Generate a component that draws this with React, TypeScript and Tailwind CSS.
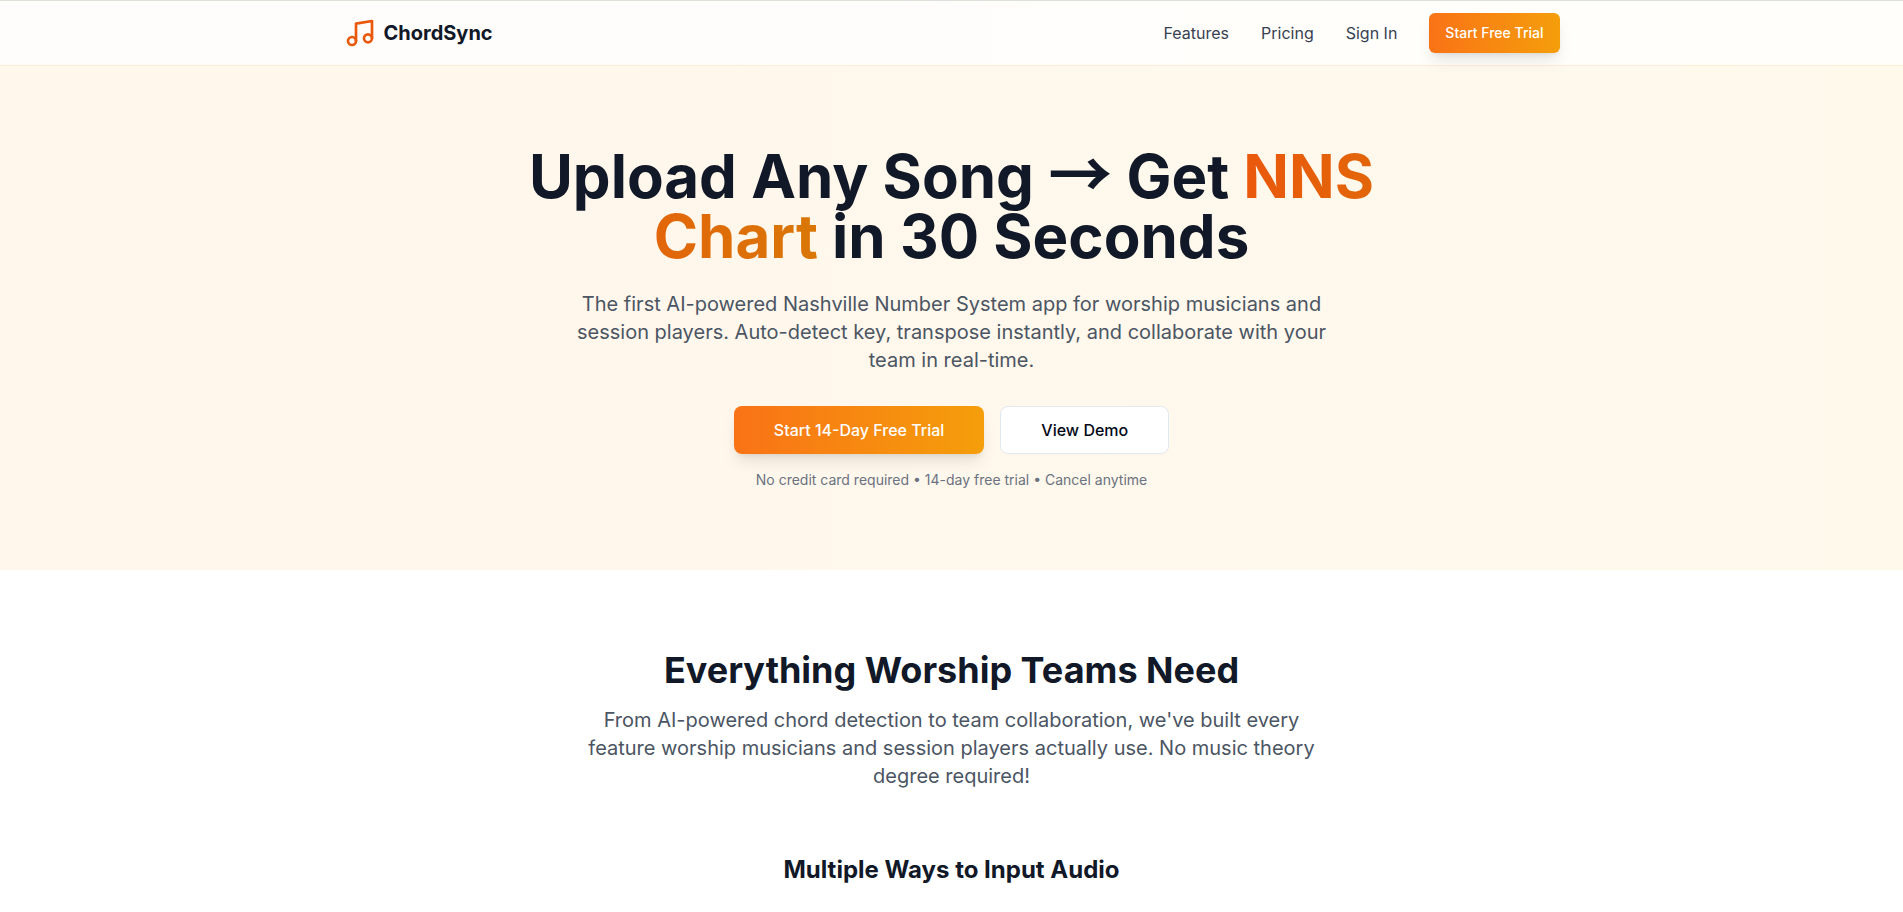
import React from 'react';
import { Music } from 'lucide-react';

const navLinks = [
  { name: 'Features', href: '#features' },
  { name: 'Pricing', href: '#pricing' },
  { name: 'Sign In', href: '#signin' },
];

const Navbar: React.FC = () => {
  return (
    <nav className="border-t border-b border-t-[#dde2d8] border-b-[#ffedd5] bg-white/80">
      <div className="max-w-7xl mx-auto px-4 sm:px-6 lg:px-8">
        <div className="flex items-center justify-between h-16">
          <a href="#" className="flex items-center gap-2">
            <Music className="h-8 w-8 text-[#ea580c]" />
            <span className="text-xl font-bold text-[#111827]">ChordSync</span>
          </a>
          <div className="flex items-center gap-8">
            {navLinks.map((link) => (
              <a key={link.name} href={link.href} className="text-[#374151] hover:text-[#ea580c]">
                {link.name}
              </a>
            ))}
            <button className="h-10 px-4 rounded-md bg-linear-to-r/srgb from-[#f97316] to-[#f59e0b] text-sm font-medium text-white shadow-lg">
              Start Free Trial
            </button>
          </div>
        </div>
      </div>
    </nav>
  );
};

const Hero: React.FC = () => {
  return (
    <section className="py-20">
      <div className="max-w-4xl mx-auto text-center">
        <h1 className="mb-6 text-6xl font-bold leading-none text-[#111827]">
          Upload Any Song{' '}
          <span className="font-['Noto_Sans_CJK_JP',sans-serif] text-[64px] leading-0">→</span> Get{' '}
          <span className="bg-linear-to-r/srgb from-[#ea580c] to-[#d97706] bg-clip-text text-transparent">
            NNS Chart
          </span>{' '}
          in 30 Seconds
        </h1>
        <p className="max-w-3xl mx-auto mb-8 text-xl text-[#4b5563]">
          The first AI-powered Nashville Number System app for worship musicians and session players.
          Auto-detect key, transpose instantly, and collaborate with your team in real-time.
        </p>
        <div className="flex justify-center gap-4">
          <button className="h-12 px-10 rounded-lg bg-linear-to-r/srgb from-[#f97316] to-[#f59e0b] font-medium text-white shadow-lg">
            Start 14-Day Free Trial
          </button>
          <button className="h-12 px-10 rounded-lg border border-[#e2e8f0] bg-white font-medium text-[#020817]">
            View Demo
          </button>
        </div>
        <p className="mt-4 text-sm text-[#6b7280]">
          No credit card required • 14-day free trial • Cancel anytime
        </p>
      </div>
    </section>
  );
};

const Features: React.FC = () => {
  return (
    <section id="features" className="grow bg-white pt-20 pb-6">
      <div className="max-w-7xl mx-auto px-8 text-center">
        <h2 className="mb-4 text-4xl font-bold text-[#111827]">Everything Worship Teams Need</h2>
        <p className="max-w-3xl mx-auto mb-16 text-xl text-[#4b5563]">
          From AI-powered chord detection to team collaboration, we've built every feature worship
          musicians and session players actually use. No music theory degree required!
        </p>
        <h3 className="text-2xl font-bold text-[#111827]">Multiple Ways to Input Audio</h3>
      </div>
    </section>
  );
};

const App: React.FC = () => {
  return (
    <div className="flex min-h-screen flex-col bg-linear-to-r/srgb from-[#fff6ec] to-[#fff9ec] font-[Inter,sans-serif]">
      <Navbar />
      <Hero />
      <Features />
    </div>
  );
};

export default App;
